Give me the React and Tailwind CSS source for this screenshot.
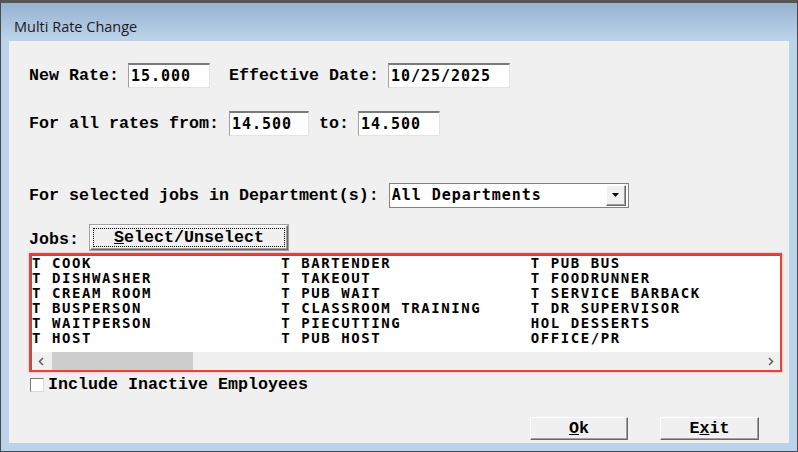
import React from "react";

const LBL = "font-['Liberation_Mono',monospace] font-bold text-[16.67px] leading-[20px] text-black whitespace-pre";
const VAL = "font-['DejaVu_Sans_Mono',monospace] font-bold text-[15px] tracking-[0.97px] text-black whitespace-pre";
const ITEM = "font-['DejaVu_Sans_Mono',monospace] font-bold text-[14px] tracking-[1.57px] leading-[15px] text-black whitespace-pre";

const JOBS = [
  ["T COOK", "T DISHWASHER", "T CREAM ROOM", "T BUSPERSON", "T WAITPERSON", "T HOST"],
  ["T BARTENDER", "T TAKEOUT", "T PUB WAIT", "T CLASSROOM TRAINING", "T PIECUTTING", "T PUB HOST"],
  ["T PUB BUS", "T FOODRUNNER", "T SERVICE BARBACK", "T DR SUPERVISOR", "HOL DESSERTS", "OFFICE/PR"],
];

const Field = ({ className, children }) => (
  <div
    className={
      "h-[25px] bg-white border-t-2 border-l border-r border-b border-t-[#7a7a7a] border-l-[#a0a0a0] border-r-[#e3e3e3] border-b-[#e3e3e3] pl-[2px] flex items-center " +
      VAL +
      " " +
      className
    }
  >
    {children}
  </div>
);

const WinButton = ({ className, children }) => (
  <div
    className={
      "bg-[#f0f0f0] border border-t-white border-l-white border-r-[#696969] border-b-[#696969] shadow-[inset_-1px_-1px_0_#a0a0a0] flex items-center justify-center " +
      className
    }
  >
    {children}
  </div>
);

export default function App() {
  return (
    <div className="w-[798px] h-[452px] flex flex-col bg-[#bcd4eb] border border-[#4a4a4a] border-t-[3px] border-t-[#555] overflow-hidden">
      {/* Title bar */}
      <div className="h-[38px] shrink-0 flex items-end pb-[4px] pl-[13px] bg-linear-to-b from-[#97b2d0] to-[#bcd4eb]">
        <span className="font-['Open_Sans',sans-serif] text-[14.5px] leading-[20px] text-[#1e1a24]">Multi Rate Change</span>
      </div>

      {/* Body */}
      <div className="ml-[8px] mr-[8px] mb-[8px] flex-1 bg-[#f0f0f0] pt-[22px] pl-[20px] flex flex-col">
        <div className="flex items-center h-[25px]">
          <span className={LBL}>New Rate:</span>
          <Field className="ml-[9px] w-[82px]">15.000</Field>
          <span className={LBL + " ml-[19px]"}>Effective Date:</span>
          <Field className="ml-[9px] w-[122px]">10/25/2025</Field>
        </div>

        <div className="flex items-center h-[25px] mt-[23px]">
          <span className={LBL}>For all rates from:</span>
          <Field className="ml-[10px] w-[80px]">14.500</Field>
          <span className={LBL + " ml-[10px]"}>to:</span>
          <Field className="ml-[9px] w-[82px]">14.500</Field>
        </div>

        <div className="flex items-center h-[25px] mt-[47px]">
          <span className={LBL}>For selected jobs in Department(s):</span>
          <div className="ml-[10px] w-[240px] h-[25px] bg-white border border-[#828282] flex items-center pl-[2px] pr-[2px]">
            <span className={VAL + " flex-1"}>All Departments</span>
            <WinButton className="w-[20px] h-[21px]">
              <svg width="8" height="5" viewBox="0 0 8 5">
                <path d="M0 0 H7 L3.5 4 Z" fill="#000" />
              </svg>
            </WinButton>
          </div>
        </div>

        <div className="flex items-center h-[25px] mt-[17px]">
          <span className={LBL + " mt-[5px]"}>Jobs:</span>
          <WinButton className="ml-[11px] w-[198px] h-[25px] p-[2px] outline outline-[#a0a0a0]">
            <div className="w-full h-full border border-dotted border-black flex items-center justify-center">
              <span className={LBL}>
                <span className="underline">S</span>elect/Unselect
              </span>
            </div>
          </WinButton>
        </div>

        {/* Jobs list */}
        <div className="mt-[3px] w-[753px] h-[119px] border-2 border-[#e8403c] shadow-[0_0_2px_rgba(232,64,60,0.5)]">
          <div className="h-full flex flex-col bg-white border-t border-l border-[#696969]">
            <div className="flex">
              {JOBS.map((col, i) => (
                <div key={i} className="w-[250px] flex flex-col">
                  {col.map((job) => (
                    <span key={job} className={ITEM}>
                      {job}
                    </span>
                  ))}
                </div>
              ))}
            </div>
            <div className="mt-auto h-[18px] bg-[#f0f0f0] flex items-center">
              <div className="w-[18px] h-full flex items-center justify-center">
                <svg width="6" height="9" viewBox="0 0 6 9">
                  <path d="M5 1 L1.5 4.5 L5 8" stroke="#606060" strokeWidth="1.6" fill="none" />
                </svg>
              </div>
              <div className="ml-[2px] w-[141px] h-full bg-[#cdcdcd]" />
              <div className="ml-auto w-[18px] h-full flex items-center justify-center">
                <svg width="6" height="9" viewBox="0 0 6 9">
                  <path d="M1 1 L4.5 4.5 L1 8" stroke="#606060" strokeWidth="1.6" fill="none" />
                </svg>
              </div>
            </div>
          </div>
        </div>

        <div className="flex items-center mt-[5px] h-[15px]">
          <div className="ml-[1px] w-[14px] h-[14px] bg-white border border-t-[#7a7a7a] border-l-[#7a7a7a] border-r-[#dcdcdc] border-b-[#dcdcdc]" />
          <span className={LBL + " ml-[4px]"}>Include Inactive Employees</span>
        </div>

        <div className="flex justify-end pr-[30px] mt-[25px] gap-[32px]">
          <WinButton className="w-[98px] h-[23px]">
            <span className={LBL}>
              <span className="underline">O</span>k
            </span>
          </WinButton>
          <WinButton className="w-[99px] h-[23px]">
            <span className={LBL}>
              E<span className="underline">x</span>it
            </span>
          </WinButton>
        </div>
      </div>
    </div>
  );
}
